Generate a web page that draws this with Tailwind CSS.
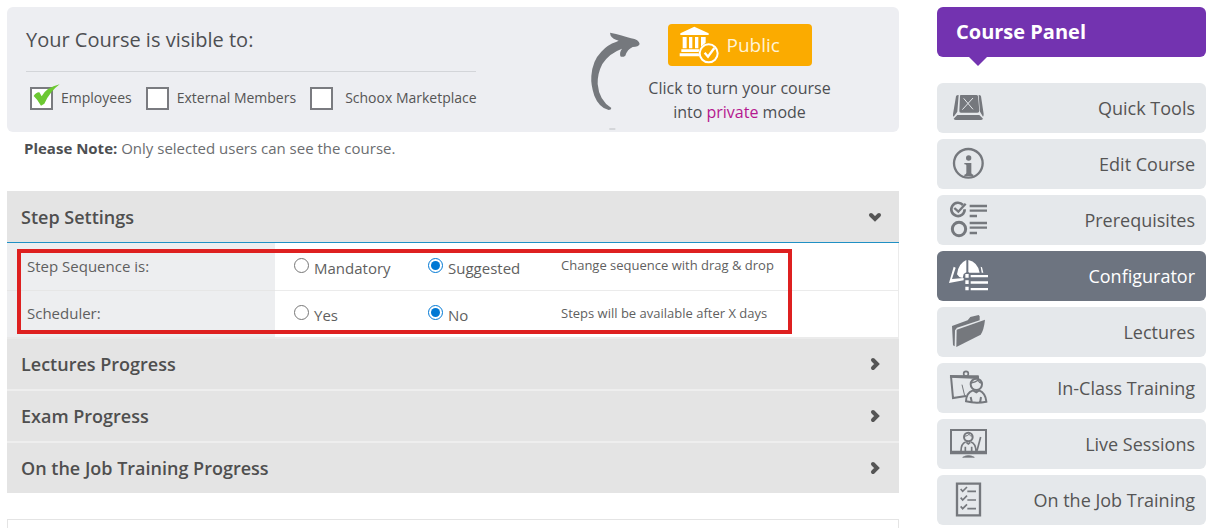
<!DOCTYPE html>
<html lang="en">

<head>
  <meta charset="UTF-8">
  <meta name="viewport" content="width=device-width, initial-scale=1.0">
  <title>Course Configurator</title>
  <script src="https://cdn.jsdelivr.net/npm/@tailwindcss/browser@4"></script>
</head>

<body class="bg-white font-['Open_Sans',sans-serif] text-[#555]">
  <div class="flex items-start gap-[38px] pt-[7px] pl-[7px] pr-[9px]">

    <main class="flex-1 min-w-0">
      <!-- Visibility -->
      <section class="flex justify-between h-[125px] rounded-md bg-[#edeef2] pl-[19px] pr-[67px]">
        <div class="w-[450px] pt-[17px]">
          <h2 class="text-xl leading-8 pb-[15px] border-b border-[#d3d5d9] text-[#4d4f52]">Your Course is visible to:</h2>
          <div class="flex gap-[14px] pt-[14px] pl-1 text-sm leading-6 whitespace-nowrap">
            <label class="relative flex items-center gap-2">
              <input type="checkbox" checked class="appearance-none size-[23px] border-2 border-[#7a7b80] bg-white">
              <svg class="absolute left-0 bottom-0 w-[31px] h-[27px]" viewBox="89 248 93 81" fill="#6cc832">
                <path d="M100 287 Q108 275 117 276 Q120 280 124 288 Q138 261 178 252 Q150 272 132 310 L122 316 Q113 299 100 287Z" />
              </svg>
              Employees
            </label>
            <label class="flex items-center gap-2">
              <input type="checkbox" class="appearance-none size-[23px] border-2 border-[#7a7b80] bg-white">
              External Members
            </label>
            <label class="flex items-center gap-3">
              <input type="checkbox" class="appearance-none size-[23px] border-2 border-[#7a7b80] bg-white">
              Schoox Marketplace
            </label>
          </div>
        </div>

        <div class="flex">
          <svg class="w-[51px] h-[98px] mt-[25px]" viewBox="60 97 153 294" fill="#75787d">
            <path d="M120 99 Q158 107 183 116 Q207 120 209 133 Q206 142 188 142 Q172 149 166 168 Q158 174 151 170 Q148 157 156 147 Q117 161 97 193 Q82 222 83 253 Q87 302 124 325 Q124 331 116 331 Q87 324 73 288 Q62 256 64 229 Q67 183 94 156 Q113 135 138 127 L146 123 Q128 118 122 108Z" />
            <path d="M118 387h18v2h-18z" opacity=".6" />
          </svg>
          <div class="flex flex-col items-center w-[185px] ml-[6px] pt-[17px]">
            <button type="button" class="flex items-center gap-2 w-36 h-[42px] rounded pl-[11px] bg-[#fbab00] text-[#fff3d6] text-[19px]">
              <svg class="w-10 h-[38px]" viewBox="318 82 120 114" fill="#fff">
                <path d="M322 104 L364 84 L407 104 V109 H322Z M329 115h12v34h-12z M348 115h10v34h-10z M366 115h10v34h-10z M384 115h14v17l-14 12z M325 152h54l-2 8h-52z M320 164h57l2 9h-59z" />
                <circle cx="407" cy="164" r="27" fill="none" stroke="#fff" stroke-width="6" />
                <path d="M395 162 L405 174 L424 148" fill="none" stroke="#fff" stroke-width="7" />
              </svg>
              Public
            </button>
            <p class="pt-[10px] text-base leading-6 text-center text-[#4d4f52] whitespace-nowrap">Click to turn your course<br>into <a href="#" class="text-[#b5178f]">private</a> mode</p>
          </div>
        </div>
      </section>

      <p class="pt-1 pl-[17px] text-[15px] leading-6 text-[#6b6d70]"><strong class="text-[#4d4f52]">Please Note:</strong> Only selected users can see the course.</p>

      <!-- Settings accordion -->
      <section class="mt-[31px] font-semibold text-lg text-[#4f4f4f]">
        <button type="button" class="flex w-full h-[52px] items-center justify-between bg-[#e4e4e4] border-b border-[#2090c4] pl-[14px] pr-4">
          Step Settings
          <svg class="size-4" viewBox="0 0 16 16" fill="none" stroke="#555" stroke-width="4" stroke-linecap="round"><path d="M4 6l4 4 4-4" /></svg>
        </button>

        <div class="relative">
          <table class="w-full table-fixed border-separate border-spacing-0 text-left font-normal text-[15px] text-[#5f5f5f]">
            <tbody>
              <tr class="h-12">
                <th scope="row" class="w-[268px] pl-5 border-b border-[#e6e6e6] bg-[#edeef0] font-normal">Step Sequence is:</th>
                <td class="w-[153px] pl-[19px] border-b border-[#ebebeb]">
                  <label class="flex items-center gap-[5px] pt-1"><input type="radio" name="sequence" class="size-[15px] mb-[6px] accent-[#0078d4]">Mandatory</label>
                </td>
                <td class="w-[133px] border-b border-[#ebebeb]">
                  <label class="flex items-center gap-[5px] pt-1"><input type="radio" name="sequence" checked class="size-[15px] mb-[6px] accent-[#0078d4]">Suggested</label>
                </td>
                <td class="pb-[2px] border-b border-r border-[#ebebeb] text-[13px]">Change sequence with drag &amp; drop</td>
              </tr>
              <tr class="h-12">
                <th scope="row" class="pl-5 border-b-2 border-[#e9e9e9] bg-[#edeef0] font-normal">Scheduler:</th>
                <td class="pl-[19px] border-b-2 border-[#ebebeb]">
                  <label class="flex items-center gap-[5px] pt-1"><input type="radio" name="scheduler" class="size-[15px] mb-[6px] accent-[#0078d4]">Yes</label>
                </td>
                <td class="border-b-2 border-[#ebebeb]">
                  <label class="flex items-center gap-[5px] pt-1"><input type="radio" name="scheduler" checked class="size-[15px] mb-[6px] accent-[#0078d4]">No</label>
                </td>
                <td class="pb-[2px] border-b-2 border-r border-[#ebebeb] text-[13px]">Steps will be available after X days</td>
              </tr>
            </tbody>
          </table>
          <div class="absolute left-[10px] top-[6px] w-[775px] h-[85px] border-4 border-[#de2020] pointer-events-none"></div>
        </div>

        <div class="flex flex-col gap-[2px] bg-[#eee]">
          <button type="button" class="flex h-[50px] items-center justify-between bg-[#e4e4e4] pl-[14px] pr-4">
            Lectures Progress
            <svg class="size-4" viewBox="0 0 16 16" fill="none" stroke="#555" stroke-width="4" stroke-linecap="round"><path d="M6 4l4 4-4 4" /></svg>
          </button>
          <button type="button" class="flex h-[50px] items-center justify-between bg-[#e4e4e4] pl-[14px] pr-4">
            Exam Progress
            <svg class="size-4" viewBox="0 0 16 16" fill="none" stroke="#555" stroke-width="4" stroke-linecap="round"><path d="M6 4l4 4-4 4" /></svg>
          </button>
          <button type="button" class="flex h-[50px] items-center justify-between bg-[#e4e4e4] pl-[14px] pr-4">
            On the Job Training Progress
            <svg class="size-4" viewBox="0 0 16 16" fill="none" stroke="#555" stroke-width="4" stroke-linecap="round"><path d="M6 4l4 4-4 4" /></svg>
          </button>
        </div>
      </section>

      <section class="mt-[26px] h-[9px] border border-b-0 border-[#e4e4e4]"></section>
    </main>

    <!-- Course panel -->
    <aside class="w-[269px] shrink-0">
      <h2 class="relative h-[50px] rounded-md bg-[#7333b0] pl-[19px] text-xl leading-[50px] font-bold text-white">
        Course Panel
        <svg class="absolute left-8 top-[50px] w-[18px] h-[9px]" viewBox="0 0 18 9" fill="#7333b0"><path d="M0 0h18L9 9z" /></svg>
      </h2>
      <nav class="flex flex-col gap-[6px] mt-[26px] text-lg text-[#555]">
        <a href="#" class="flex h-[50px] items-center justify-between rounded-md bg-[#e5e8eb] pl-[11px] pr-[11px]">
          <svg class="size-10" viewBox="54 261 120 120" fill="#75787d">
            <path d="M92 282h47q4 0 5 4l4 43q0 6-6 6H93q-6 0-5-6l2-43q0-4 2-4z" />
            <path d="M78 286q1-4 8-4l-4 50-11 15q-3-1-2-8z M146 282q6 0 7 4l8 53q0 6-2 8l-9-15z M82 342h66l11 11q-2 4-7 4H78q-5 0-7-4z" />
            <path d="M101 292l28 33M129 291l-32 35" fill="none" stroke="#e5e8eb" stroke-width="3" />
          </svg>
          Quick Tools
        </a>
        <a href="#" class="flex h-[50px] items-center justify-between rounded-md bg-[#e5e8eb] pl-[11px] pr-[11px]">
          <svg class="size-10" viewBox="54 432 120 120" fill="#75787d">
            <circle cx="115" cy="490" r="43" fill="none" stroke="#75787d" stroke-width="7" />
            <circle cx="116" cy="474" r="8" />
            <path d="M103 489h21v30q0 4 6 5v4h-27v-4q6-1 6-5v-23q0-3-6-3z" />
          </svg>
          Edit Course
        </a>
        <a href="#" class="flex h-[50px] items-center justify-between rounded-md bg-[#e5e8eb] pl-[11px] pr-[11px]">
          <svg class="size-10" viewBox="54 30 120 120" fill="none" stroke="#75787d" stroke-width="8">
            <path d="M99 45A20 20 0 1 0 104 58" />
            <path d="M73 54l12 11 22-24" stroke-width="7" />
            <circle cx="87" cy="117" r="20" stroke-width="9" />
            <path d="M119 48h52M119 62h52M119 78h22M119 99h52M119 113h52M119 129h22" stroke-width="7" />
          </svg>
          Prerequisites
        </a>
        <a href="#" class="flex h-[50px] items-center justify-between rounded-md bg-[#6d7480] pl-[11px] pr-[11px] text-white">
          <svg class="size-10" viewBox="54 198 120 120" fill="#fff">
            <path d="M109 210v37l-8 5-3 12-10-3-7-8q3-32 28-43z M115 210q28 6 34 38h-31l-3-2z" />
            <path d="M71 230l6 3-11 34 35-3v7l-44 8z M152 230l4 2 4 16h-5z" />
            <path d="M106 252h10v11h-10z M106 271h10v11h-10z M106 290h10v11h-10z M122 255h52v7h-52z M122 274h52v7h-52z M122 294h52v7h-52z" />
          </svg>
          Configurator
        </a>
        <a href="#" class="flex h-[50px] items-center justify-between rounded-md bg-[#e5e8eb] pl-[11px] pr-[11px]">
          <svg class="size-10" viewBox="54 366 120 120" fill="#75787d">
            <path d="M66 408l47-17 8-10 25-6 3 4v12l-68 22-6 8-1 48-5-3z" />
            <path d="M80 419l85-30q-3 30-13 45l-73 37z" />
          </svg>
          Lectures
        </a>
        <a href="#" class="flex h-[50px] items-center justify-between rounded-md bg-[#e5e8eb] pl-[11px] pr-[11px]">
          <svg class="size-10" viewBox="54 42 120 120" fill="none" stroke="#75787d" stroke-width="6">
            <path d="M108 126l-39 6-6-65h83" />
            <path d="M60 67l87 4" stroke-width="8" />
            <circle cx="108" cy="59" r="7" stroke-width="5" />
            <path d="M96 92l8 33" stroke-width="3" />
            <circle cx="139" cy="91" r="17" />
            <path d="M123 87q14-2 21-8 3 7 12 9" stroke-width="4" />
            <path d="M129 109q-21 8-21 33 31 8 61 1-2-26-22-34l-8 6zM122 129l4 18M153 129l-3 18" />
          </svg>
          In-Class Training
        </a>
        <a href="#" class="flex h-[50px] items-center justify-between rounded-md bg-[#e5e8eb] pl-[11px] pr-[11px]">
          <svg class="size-10" viewBox="54 210 120 120" fill="none" stroke="#75787d" stroke-width="6">
            <path d="M63 228h105v70H63z" />
            <path d="M61 295h109" stroke-width="10" />
            <circle cx="115" cy="249" r="13" />
            <path d="M103 247q10-1 14-6 3 5 11 6" stroke-width="3" />
            <path d="M107 264q-14 5-14 27M123 264q14 5 15 27M106 278v13M125 278v13M109 265l6 5 6-5M152 249l-11 41" stroke-width="5" />
            <path d="M98 310q17-11 35 0z" fill="#75787d" stroke-width="2" />
          </svg>
          Live Sessions
        </a>
        <a href="#" class="flex h-[50px] items-center justify-between rounded-md bg-[#e5e8eb] pl-[11px] pr-[11px]">
          <svg class="size-10" viewBox="54 378 120 120" fill="none" stroke="#75787d" stroke-width="7">
            <path d="M81 389h69v95H81z" />
            <path d="M112 412h26M112 438h26M112 464h26" stroke-width="5" />
            <path d="M92 405l6 7 13-13M92 431l6 7 13-13M92 457l6 7 13-13" stroke-width="5" />
          </svg>
          On the Job Training
        </a>
      </nav>
    </aside>
  </div>
</body>

</html>
